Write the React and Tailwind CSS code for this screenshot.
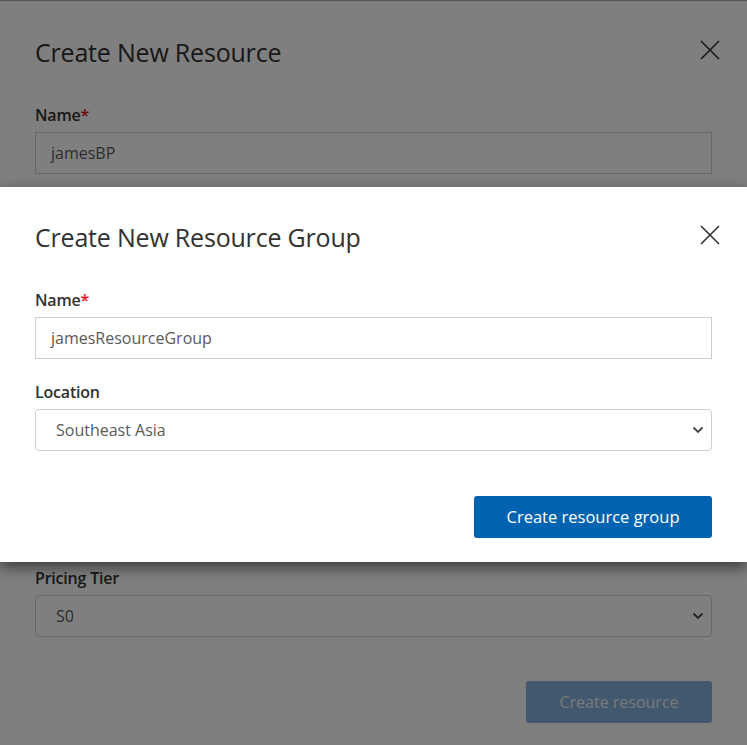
import React from 'react';

const font = { fontFamily: '"Open Sans", "Noto Sans", "Liberation Sans", sans-serif' };

function CloseIcon() {
  return (
    <svg width="22" height="22" viewBox="0 0 22 22" className="text-[#323130]">
      <path d="M2 2 L20 20 M20 2 L2 20" stroke="currentColor" strokeWidth="1.6" fill="none" />
    </svg>
  );
}

function Chevron() {
  return (
    <svg width="12" height="8" viewBox="0 0 12 8" className="text-[#444]">
      <path d="M1.5 1.5 L6 6 L10.5 1.5" stroke="currentColor" strokeWidth="1.8" fill="none" />
    </svg>
  );
}

function Label({ children, required }) {
  return (
    <div className="text-[16px] leading-[24px] font-semibold text-[#323130] tracking-[-0.2px]">
      {children}
      {required && <span className="text-[#e00b1c]">*</span>}
    </div>
  );
}

function TextField({ value }) {
  return (
    <div className="mt-[5px] h-[42px] border border-[#cfcfcf] flex items-center pl-[15px] text-[16px] text-[#5a5a5a]">
      {value}
    </div>
  );
}

function SelectField({ value }) {
  return (
    <div className="mt-[5px] h-[42px] border border-[#cfcfcf] rounded-[4px] flex items-center justify-between pl-[20px] pr-[7px] text-[16px] text-[#5a5a5a]">
      <span>{value}</span>
      <Chevron />
    </div>
  );
}

function Header({ title }) {
  return (
    <div className="flex items-start justify-between pt-[32px]">
      <h2 className="text-[25px] leading-[36px] font-normal text-[#323130] tracking-[-0.2px]">{title}</h2>
      <div className="mt-[5px] mr-[-9px]">
        <CloseIcon />
      </div>
    </div>
  );
}

export default function App() {
  return (
    <div className="relative h-[745px] w-full overflow-hidden bg-white" style={font}>
      {/* Back modal: Create New Resource */}
      <div className="border-t border-[#aaa] px-[35px] pt-[1px]">
        <Header title="Create New Resource" />
        <div className="mt-[33px]">
          <Label required>Name</Label>
          <TextField value="jamesBP" />
        </div>
        {/* fields covered by the resource group dialog */}
        <div className="h-[368px]" />
        <div className="mt-[24px]">
          <Label>Pricing Tier</Label>
          <SelectField value="S0" />
        </div>
        <div className="flex justify-end mt-[44px]">
          <button className="w-[186px] h-[42px] rounded-[3px] bg-[#84b1dc] text-[#eef3f8] text-[16px]">
            Create resource
          </button>
        </div>
      </div>

      {/* Backdrop */}
      <div className="absolute inset-0 bg-black/50" />

      {/* Front modal: Create New Resource Group */}
      <div className="absolute left-0 right-0 top-[187px] bg-white px-[35px] pb-[24px] shadow-[0_5px_14px_rgba(0,0,0,0.55)]">
        <Header title="Create New Resource Group" />
        <div className="mt-[33px]">
          <Label required>Name</Label>
          <TextField value="jamesResourceGroup" />
        </div>
        <div className="mt-[21px]">
          <Label>Location</Label>
          <SelectField value="Southeast Asia" />
        </div>
        <div className="flex justify-end mt-[45px]">
          <button className="w-[238px] h-[42px] rounded-[3px] bg-[#0063b1] text-white text-[16.5px]">
            Create resource group
          </button>
        </div>
      </div>
    </div>
  );
}
